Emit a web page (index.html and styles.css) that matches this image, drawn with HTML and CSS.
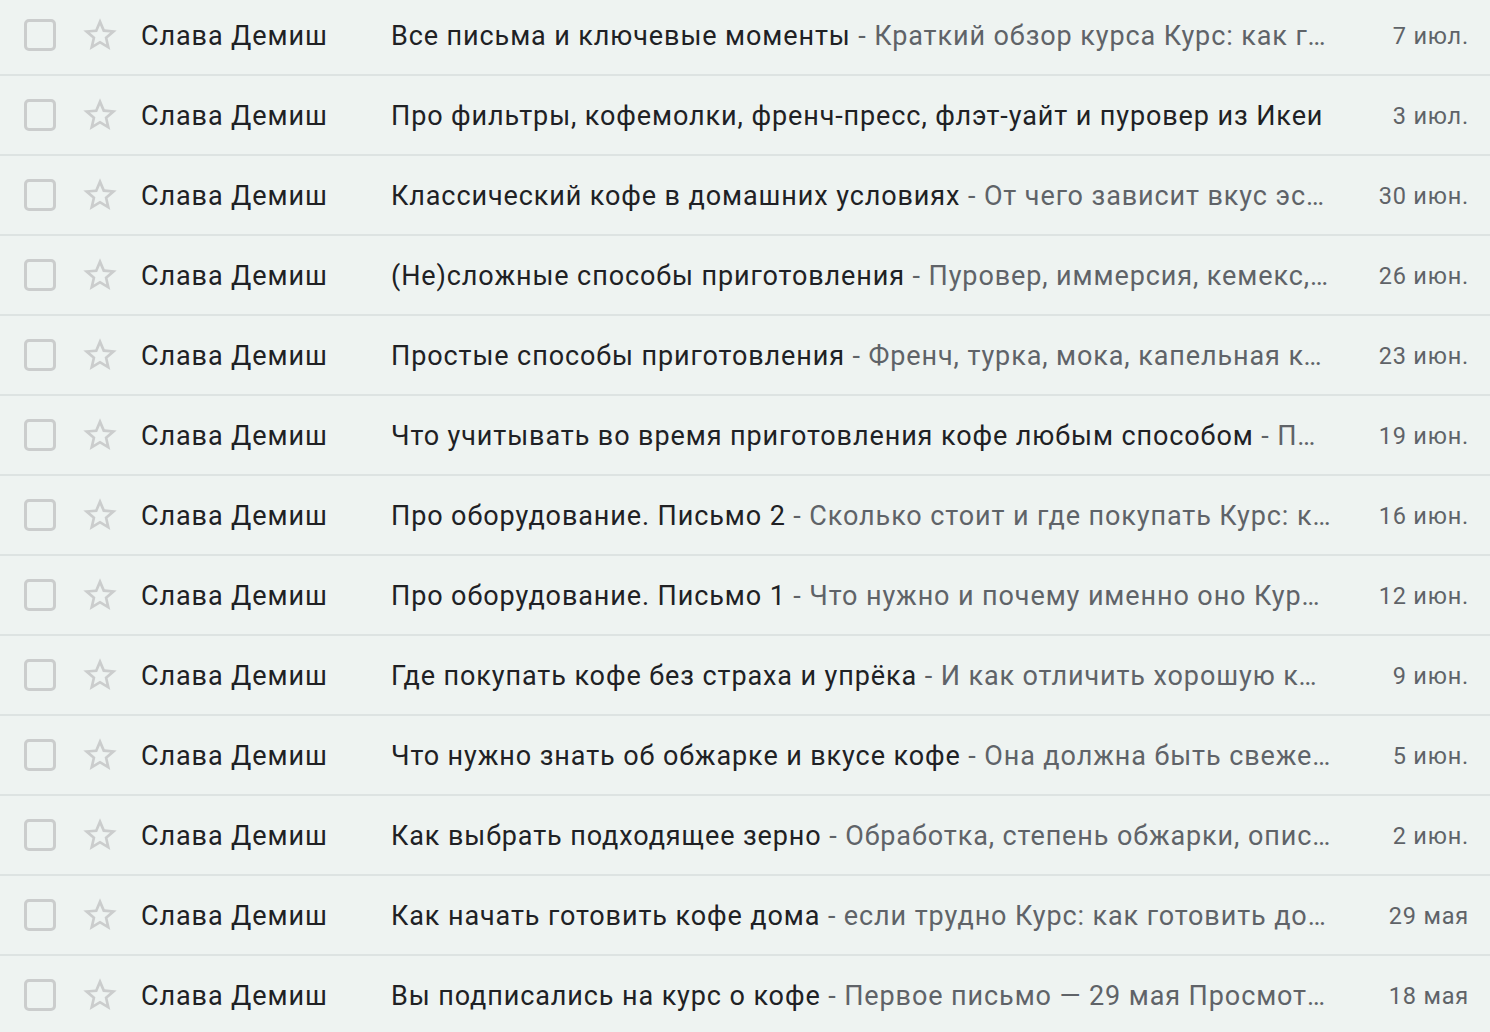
FILE: index.html
```html
<!DOCTYPE html>
<html lang="ru">
<head>
<meta charset="utf-8">
<title>Входящие</title>
<link rel="stylesheet" href="styles.css">
</head>
<body>
<svg width="0" height="0" class="defs" aria-hidden="true">
  <defs>
    <path id="star" d="M22 9.24l-7.19-.62L12 2 9.19 8.63 2 9.24l5.46 4.73L5.82 21 12 17.27 18.18 21l-1.63-7.03L22 9.24zM12 15.4l-3.76 2.27 1-4.28-3.32-2.88 4.38-.38L12 6.1l1.71 4.04 4.38.38-3.32 2.88 1 4.28L12 15.4z"/>
  </defs>
</svg>
<ul class="list">
  <li class="row"><span class="check"></span><svg class="star" viewBox="0 0 24 24"><use href="#star"/></svg><span class="name">Слава Демиш</span><span class="line"><span class="subject">Все письма и ключевые моменты</span><span class="snippet">&nbsp;- Краткий обзор курса Курс: как готовить дома вкусный кофе</span></span><span class="date">7 июл.</span></li>
  <li class="row"><span class="check"></span><svg class="star" viewBox="0 0 24 24"><use href="#star"/></svg><span class="name">Слава Демиш</span><span class="line"><span class="subject">Про фильтры, кофемолки, френч-пресс, флэт-уайт и пуровер из Икеи</span><span class="snippet">&nbsp;- Ответы на вопросы Курс: как готовить дома</span></span><span class="date">3 июл.</span></li>
  <li class="row"><span class="check"></span><svg class="star" viewBox="0 0 24 24"><use href="#star"/></svg><span class="name">Слава Демиш</span><span class="line"><span class="subject">Классический кофе в домашних условиях</span><span class="snippet">&nbsp;- От чего зависит вкус эспрессо Курс: как готовить</span></span><span class="date">30 июн.</span></li>
  <li class="row"><span class="check"></span><svg class="star" viewBox="0 0 24 24"><use href="#star"/></svg><span class="name">Слава Демиш</span><span class="line"><span class="subject">(Не)сложные способы приготовления</span><span class="snippet">&nbsp;- Пуровер, иммерсия, кемекс, аэропресс Курс</span></span><span class="date">26 июн.</span></li>
  <li class="row"><span class="check"></span><svg class="star" viewBox="0 0 24 24"><use href="#star"/></svg><span class="name">Слава Демиш</span><span class="line"><span class="subject">Простые способы приготовления</span><span class="snippet">&nbsp;- Френч, турка, мока, капельная кофеварка Курс</span></span><span class="date">23 июн.</span></li>
  <li class="row"><span class="check"></span><svg class="star" viewBox="0 0 24 24"><use href="#star"/></svg><span class="name">Слава Демиш</span><span class="line"><span class="subject">Что учитывать во время приготовления кофе любым способом</span><span class="snippet">&nbsp;- Помол, вода, температура Курс</span></span><span class="date">19 июн.</span></li>
  <li class="row"><span class="check"></span><svg class="star" viewBox="0 0 24 24"><use href="#star"/></svg><span class="name">Слава Демиш</span><span class="line"><span class="subject">Про оборудование. Письмо 2</span><span class="snippet">&nbsp;- Сколько стоит и где покупать Курс: как готовить</span></span><span class="date">16 июн.</span></li>
  <li class="row"><span class="check"></span><svg class="star" viewBox="0 0 24 24"><use href="#star"/></svg><span class="name">Слава Демиш</span><span class="line"><span class="subject">Про оборудование. Письмо 1</span><span class="snippet">&nbsp;- Что нужно и почему именно оно Курс: как готовить</span></span><span class="date">12 июн.</span></li>
  <li class="row"><span class="check"></span><svg class="star" viewBox="0 0 24 24"><use href="#star"/></svg><span class="name">Слава Демиш</span><span class="line"><span class="subject">Где покупать кофе без страха и упрёка</span><span class="snippet">&nbsp;- И как отличить хорошую кофейню Курс</span></span><span class="date">9 июн.</span></li>
  <li class="row"><span class="check"></span><svg class="star" viewBox="0 0 24 24"><use href="#star"/></svg><span class="name">Слава Демиш</span><span class="line"><span class="subject">Что нужно знать об обжарке и вкусе кофе</span><span class="snippet">&nbsp;- Она должна быть свежей Курс: как готовить</span></span><span class="date">5 июн.</span></li>
  <li class="row"><span class="check"></span><svg class="star" viewBox="0 0 24 24"><use href="#star"/></svg><span class="name">Слава Демиш</span><span class="line"><span class="subject">Как выбрать подходящее зерно</span><span class="snippet">&nbsp;- Обработка, степень обжарки, описание вкуса Курс</span></span><span class="date">2 июн.</span></li>
  <li class="row"><span class="check"></span><svg class="star" viewBox="0 0 24 24"><use href="#star"/></svg><span class="name">Слава Демиш</span><span class="line"><span class="subject">Как начать готовить кофе дома</span><span class="snippet">&nbsp;- если трудно Курс: как готовить дома вкусный кофе</span></span><span class="date">29 мая</span></li>
  <li class="row"><span class="check"></span><svg class="star" viewBox="0 0 24 24"><use href="#star"/></svg><span class="name">Слава Демиш</span><span class="line"><span class="subject">Вы подписались на курс о кофе</span><span class="snippet">&nbsp;- Первое письмо — 29 мая Просмотреть в браузере</span></span><span class="date">18 мая</span></li>
</ul>
</body>
</html>
```
FILE: styles.css
```css
html, body {
  margin: 0;
  padding: 0;
  background: #eef3f1;
  overflow: hidden;
}

.defs {
  position: absolute;
}

.list {
  list-style: none;
  margin: -4px 0 0 0;
  padding: 0;
  font-family: Roboto, "Noto Sans", sans-serif;
  letter-spacing: 0.9px;
}

.row {
  display: flex;
  align-items: center;
  height: 77px;
  border-bottom: 2px solid #dde3e2;
  padding: 1px 21px 0 24px;
  box-sizing: content-box;
  color: #202124;
  font-size: 27px;
  white-space: nowrap;
}

.check {
  flex: 0 0 auto;
  width: 26px;
  height: 26px;
  border: 3px solid #cbcdcd;
  border-radius: 5px;
  margin-top: -1px;
}

.star {
  flex: 0 0 auto;
  width: 40px;
  height: 40px;
  margin-left: 24px;
  margin-top: -1px;
  fill: #cbcdcd;
}

.name {
  flex: 0 0 auto;
  width: 250px;
  margin-left: 21px;
}

.line {
  flex: 1 1 auto;
  min-width: 0;
  display: flex;
}

.subject {
  flex: 0 1 auto;
  min-width: 0;
  overflow: hidden;
  text-overflow: ellipsis;
}

.snippet {
  flex: 1 1 0;
  min-width: 0;
  overflow: hidden;
  text-overflow: ellipsis;
  color: #5f6368;
}

.date {
  flex: 0 0 auto;
  width: 138px;
  text-align: right;
  font-size: 23.5px;
  letter-spacing: 0.8px;
  color: #5f6368;
}
```
